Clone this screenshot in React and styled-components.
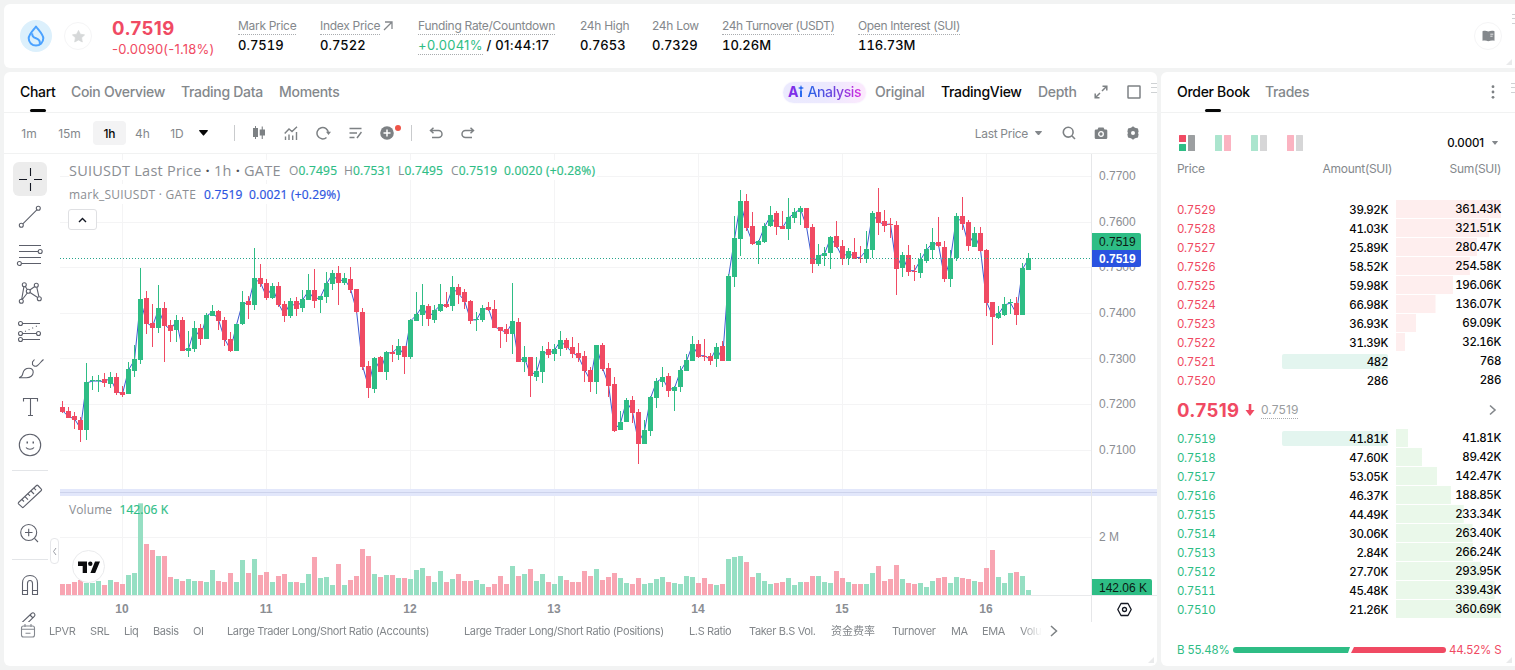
import { useState } from "react";
import styled, { createGlobalStyle, css } from "styled-components";

const GREEN = "#2ebd85";
const RED = "#f04a63";
const GREY = "#84888c";
const INK = "#070808";

const GlobalStyle = createGlobalStyle`
    * {
        box-sizing: border-box;
    }

    body {
        margin: 0;
        background-color: #f2f3f3;
        font-family: Inter, "Noto Sans CJK SC", sans-serif;
        color: ${INK};
        overflow: hidden;
    }

    button {
        border: none;
        background: none;
        padding: 0;
        margin: 0;
        font: inherit;
        color: inherit;
        cursor: pointer;
    }

    svg {
        display: block;
        flex-shrink: 0;
    }
`

const Page = styled.div`
    display: flex;
    flex-direction: column;
    gap: 4px;
    height: 670px;
    padding: 4px 0 4px 4px;
`

const Card = styled.section`
    position: relative;
    background-color: #fff;
    border-radius: 6px;
    overflow: hidden;
`

const Columns = styled.div`
    display: grid;
    grid-template-columns: 1153px 1fr;
    gap: 4px;
    height: 594px;
`

const Grip = styled.span`
    position: absolute;
    top: ${({ $top }) => $top}px;
    right: ${({ $right }) => $right}px;
    width: 6px;
    height: 10px;
    border-top: 1px solid #cfd2d4;
    border-bottom: 1px solid #cfd2d4;

    &::after {
        content: "";
        display: block;
        margin-top: 3px;
        border-top: 1px solid #cfd2d4;
    }
`

const Corner = styled.span`
    position: absolute;
    right: 3px;
    bottom: 3px;
    border: 3px solid #e9eaeb;
    border-top-color: transparent;
    border-left-color: transparent;
`

/* header */

const TopBar = styled(Card)`
    display: flex;
    align-items: center;
    height: 64px;
    padding: 0 13px 0 16px;
    border-radius: 6px 0 0 6px;
`

const CoinLogo = styled.div`
    display: grid;
    place-items: center;
    width: 32px;
    height: 32px;
    border-radius: 50%;
    background-color: #dcf0fc;
`

const RoundButton = styled.button`
    display: grid;
    place-items: center;
    width: 28px;
    height: 28px;
    border: 1px solid #f5f5f6;
    border-radius: 50%;
    color: ${({ $color }) => $color};
`

const PriceBlock = styled.div`
    width: 126px;
    margin-left: 20px;
    padding-top: 2px;
    color: ${RED};

    strong {
        display: block;
        font-size: 18.5px;
        line-height: 24px;
        font-weight: 650;
        letter-spacing: 0.45px;
    }

    span {
        display: block;
        font-size: 13px;
        line-height: 18px;
        letter-spacing: 0.2px;
    }
`

const Stats = styled.dl`
    display: flex;
    gap: 24px;
    margin: -1px auto 0 0;
`

const Stat = styled.div`
    width: ${({ $width }) => $width}px;
    white-space: nowrap;

    dt {
        display: flex;
        align-items: center;
        gap: 3px;
        height: 18px;
        font-size: 12px;
        color: ${GREY};
        letter-spacing: ${({ $track }) => $track ?? -0.3}px;
    }

    dt span, .dotted {
        line-height: 17px;
        border-bottom: 1px dotted ${({ $plain }) => ($plain ? "transparent" : "#a9acaf")};
    }

    dd {
        margin: 1px 0 0;
        height: 18px;
        font-size: 13px;
        line-height: 18px;
        font-weight: 500;
        font-variant-numeric: ${({ $clock }) => ($clock ? "normal" : "tabular-nums")};
        letter-spacing: ${({ $clock }) => ($clock ? 0.28 : 0)}px;
    }

    .dotted {
        display: inline-block;
        font-weight: 400;
        color: ${GREEN};
    }
`

/* tab bars */

const TabBar = styled.nav`
    display: flex;
    align-items: center;
    height: 41px;
    padding: 0 16px;
    border-bottom: 1px solid #f1f2f2;
`

const Tab = styled.button`
    position: relative;
    width: ${({ $width }) => $width}px;
    height: 40px;
    padding-bottom: 1px;
    margin-right: 16px;
    text-align: left;
    white-space: nowrap;
    font-size: 14px;
    font-weight: 500;
    letter-spacing: -0.3px;
    color: ${({ $active }) => ($active ? INK : GREY)};

    ${({ $active, $underline }) => $active && $underline && css`
        &::after {
            content: "";
            position: absolute;
            left: calc(50% - 8px);
            bottom: 0;
            width: 16px;
            height: 3px;
            border-radius: 2px;
            background-color: ${INK};
        }
    `}
`

const Spacer = styled.span`
    flex: 1;
`

const AiBadge = styled.button`
    display: flex;
    align-items: center;
    width: 83px;
    height: 21px;
    padding: 0 0 1px 5px;
    margin-right: 9px;
    border-radius: 11px;
    background: linear-gradient(90deg, #ebeafe, #ece9fe 50%, #fce9fd);
    box-shadow: 0 0 2px #f1ecfe;
    font-size: 14px;
    white-space: nowrap;

    b {
        font-weight: 700;
        color: #7d2fe8;
    }

    em {
        margin-left: 3px;
        font-style: normal;
        font-weight: 500;
        letter-spacing: -0.35px;
        background: linear-gradient(90deg, #2466e8, #7c3ddc 60%, #d62ee0);
        background-clip: text;
        color: transparent;
    }
`

const IconCell = styled.button`
    position: relative;
    display: grid;
    place-items: center;
    flex-shrink: 0;
    width: ${({ $width }) => $width || 32}px;
    height: 32px;
    color: #7d8184;
`

const Dot = styled.i`
    position: absolute;
    top: 8px;
    right: 2px;
    width: 6px;
    height: 6px;
    border-radius: 50%;
    background-color: #ef5448;
`

/* chart card */

const Toolbar = styled.div`
    display: flex;
    align-items: center;
    height: 41px;
    padding: 0 8px;
    border-bottom: 1px solid #f1f2f2;
`

const Interval = styled.button`
    width: ${({ $width }) => $width}px;
    height: 24px;
    border-radius: 4px;
    font-size: 12px;
    font-weight: ${({ $active }) => ($active ? 550 : 400)};
    color: ${({ $active }) => ($active ? INK : GREY)};
    background-color: ${({ $active }) => ($active ? "#f3f3f4" : "transparent")};
`

const Divider = styled.span`
    width: 1px;
    height: 16px;
    margin: 0 8px 0 ${({ $before }) => $before}px;
    background-color: #c9cbcd;
`

const PriceSelect = styled.button`
    display: flex;
    align-items: center;
    gap: 7px;
    margin-right: 11px;
    font-size: 12px;
    letter-spacing: -0.3px;
    color: ${GREY};
`

const ChartBody = styled.div`
    position: relative;
    display: grid;
    grid-template-columns: 56px 1097px;
    height: 468px;
`

const DrawTools = styled.div`
    display: flex;
    flex-direction: column;
    gap: 4px;
    padding: 8px 0 0 9px;
    height: 468px;
    overflow: hidden;

    hr {
        width: 36px;
        height: 1px;
        margin: 4px 0 4px -1px;
        border: none;
        background-color: #e3e5e8;
        flex-shrink: 0;
    }
`

const ToolButton = styled.button`
    width: 34px;
    height: 34px;
    flex-shrink: 0;
    border-radius: 6px;
    background-color: ${({ $active }) => ($active ? "#ececec" : "transparent")};
    color: ${({ $active }) => ($active ? "#131722" : "#5d606b")};
`

const CollapseHandle = styled.button`
    position: absolute;
    left: 46px;
    top: 384px;
    display: grid;
    place-items: center;
    width: 9px;
    height: 26px;
    border: 1px solid #e6e7ea;
    border-radius: 4px;
    background-color: #fff;
    color: #9a9da5;
`

const ChartArea = styled.div`
    position: relative;
    font-family: "Open Sans", sans-serif;
`

const Legend = styled.div`
    position: absolute;
    left: 6px;
    top: 6px;
    padding-left: 3px;
    white-space: nowrap;
    color: #8b8e93;
`

const LegendRow = styled.div`
    display: flex;
    align-items: center;
    width: max-content;
    height: 20px;
    margin-bottom: 4px;
    background-color: #fff;
    font-size: 12px;

    h4 {
        margin: 0;
        width: ${({ $title }) => $title}px;
        font-size: ${({ $big }) => ($big ? 14.5 : 12)}px;
        font-weight: 400;
        letter-spacing: ${({ $track }) => $track || 0}px;
    }

    h4 b {
        color: #4d5056;
        font-weight: 700;
    }
`

const Quote = styled.span`
    width: ${({ $width }) => $width}px;
    color: ${({ $color }) => $color};
    letter-spacing: 0.2px;
    -webkit-text-stroke: 0.2px currentColor;

    i {
        font-style: normal;
        color: #8b8e93;
        -webkit-text-stroke: 0;
    }
`

const LegendToggle = styled.button`
    display: grid;
    place-items: center;
    width: 29px;
    height: 21px;
    margin: 5px 0 0 -1px;
    border: 1px solid #dfe0e3;
    border-radius: 3px;
    background-color: #fff;
    color: #131722;
`

const VolumeLegend = styled(Legend)`
    top: 347px;
    font-size: 12px;
    letter-spacing: 0.1px;

    span {
        margin-left: 4px;
        color: ${GREEN};
        -webkit-text-stroke: 0.2px currentColor;
    }
`

const BrandMark = styled.div`
    position: absolute;
    left: 12px;
    top: 396px;
    display: grid;
    place-items: center;
    width: 33px;
    height: 33px;
    border: 1px solid #eaebed;
    border-radius: 50%;
    background-color: #fff;
`

const AxisLabel = styled.text`
    font-family: "Liberation Sans", Arial, sans-serif;
    font-size: 12px;
    font-weight: ${({ $bold }) => ($bold ? 700 : 400)};
    fill: ${({ $fill }) => $fill || "#8b8e93"};
`

const IndicatorBar = styled.div`
    display: flex;
    align-items: center;
    height: 18px;
    padding-left: 16px;
    color: #7d8184;
`

const IndicatorList = styled.div`
    display: flex;
    width: 993px;
    margin-left: 13px;
    overflow: hidden;
    mask-image: linear-gradient(90deg, #000 973px, transparent 993px);
`

const Indicator = styled.button`
    flex-shrink: 0;
    width: ${({ $width }) => $width}px;
    text-align: left;
    white-space: nowrap;
    font-size: 11px;
    line-height: 18px;
    letter-spacing: -0.38px;
    color: ${GREY};

    &:lang(zh) {
        letter-spacing: 0;
    }
`

/* order book */

const BookCard = styled(Card)`
    border-radius: 6px 0 0 6px;
`

const BookTools = styled.div`
    display: flex;
    align-items: center;
    height: 20px;
    margin: 20px 14px 0 18px;

    svg {
        margin-right: 20px;
    }

    button svg {
        margin: 0;
    }
`

const TickSize = styled.button`
    display: flex;
    align-items: center;
    gap: 8px;
    margin-left: auto;
    padding-right: 3px;
    font-size: 11.5px;
    font-weight: 500;
    letter-spacing: -0.1px;
`

const BookRow = styled.div`
    display: grid;
    grid-template-columns: 105px 106px 105px;
    height: 19px;
    margin-left: 16px;
    font-size: 11.5px;
    line-height: 20px;
    font-variant-numeric: tabular-nums;
    letter-spacing: -0.35px;
`

const BookHead = styled(BookRow)`
    margin: 6px 0 22px 16px;
    grid-template-columns: 105px 110px 109px;
    font-size: 12px;
    line-height: 19px;
    font-variant-numeric: normal;
    letter-spacing: -0.3px;
    color: ${GREY};

    span + span {
        text-align: right;
    }
`

const PriceCell = styled.span`
    color: ${({ $color }) => $color};
`

const AmountCell = styled.span`
    height: 15px;
    margin: 2px 0;
    line-height: 16px;
    text-align: right;
    border-radius: 2px;
    font-weight: 450;
    background-color: ${({ $flash }) => ($flash ? "#e3f5ef" : "transparent")};
`

const SumCell = styled.span`
    position: relative;
    height: 18px;
    margin-left: 8px;
    width: 105px;
    line-height: 18px;
    text-align: right;
    font-weight: 450;
    background: linear-gradient(${({ $tint }) => $tint}, ${({ $tint }) => $tint}) no-repeat 0 0 / var(--depth) 100%;
`

const LastRow = styled.div`
    display: flex;
    align-items: center;
    height: 39px;
    padding: 0 18px 0 16px;

    strong {
        font-size: 18.5px;
        font-weight: 650;
        letter-spacing: 0.4px;
        width: 68px;
        color: ${RED};
    }

    small {
        margin: 2px 0 0 6px;
        font-size: 12px;
        line-height: 16px;
        letter-spacing: 0.1px;
        color: #9a9da0;
        border-bottom: 1px dotted #a9acaf;
    }

    svg:last-child {
        margin-left: auto;
    }
`

const RatioBar = styled.div`
    display: flex;
    align-items: center;
    height: 16px;
    margin: 23px 0 0 16px;
    width: 325px;
    font-size: 11.5px;
    white-space: nowrap;

    span {
        width: 56px;
        color: ${GREEN};
        letter-spacing: -0.12px;
    }

    span:last-child {
        width: 52px;
        margin-left: 3px;
        color: ${RED};
    }
`

const Ratio = styled.i`
    height: 6px;
    width: ${({ $width }) => $width}px;
    background-color: ${({ $buy }) => ($buy ? GREEN : RED)};
    border-radius: ${({ $buy }) => ($buy ? "3px 0 0 3px" : "0 3px 3px 0")};
    clip-path: ${({ $buy }) => $buy
        ? "polygon(0 0, 100% 0, calc(100% - 2px) 100%, 0 100%)"
        : "polygon(3px 0, 100% 0, 100% 100%, 0 100%)"};
    margin-left: ${({ $buy }) => ($buy ? 0 : 1)}px;
`

// [up, high, body top, body bottom, low, volume], in thirds of a pixel from PRICE_TOP
const candles = [
    [0,513,531,546,550,33],[0,532,543,564,564,33],[0,546,558,570,597,39],[0,561,570,600,636,45],[1,399,456,600,630,36],[1,438,450,453,480,36],
    [1,435,450,453,486,42],[0,429,447,459,471,30],[1,426,441,462,474,45],[0,429,441,489,494,39],[0,468,486,495,500,33],[1,396,417,492,492,60],
    [1,346,387,423,440,66],[1,114,207,390,402,275],[0,183,204,282,312,153],[0,222,279,294,350,135],[1,165,234,294,308,117],[0,216,234,288,396,117],
    [0,270,285,303,335,54],[1,255,270,300,335,48],[0,261,270,363,363,42],[1,303,354,363,381,48],[1,273,294,357,366,42],[0,282,294,327,345,42],
    [1,249,255,327,327,39],[1,225,243,258,258,75],[0,240,243,273,300,42],[0,261,270,330,348,39],[0,306,327,363,366,66],[1,282,282,363,363,39],
    [1,183,216,282,285,105],[0,198,213,225,267,66],[1,54,144,225,240,108],[0,102,144,162,172,60],[0,147,159,204,209,69],[1,159,168,204,207,39],
    [0,156,168,225,230,57],[0,213,222,258,276,63],[1,204,213,258,264,39],[0,201,213,237,258,39],[1,180,207,234,246,36],[1,132,180,210,210,63],
    [0,117,180,213,234,114],[1,197,198,210,249,51],[1,126,159,201,219,54],[1,120,129,162,180,30],[0,108,129,159,225,93],[1,129,144,159,165,30],
    [0,111,147,180,188,45],[0,177,177,246,249,57],[0,234,246,411,420,138],[0,393,408,474,504,117],[1,381,384,477,489,63],[0,377,381,426,426,54],
    [1,363,366,426,450,60],[0,345,366,372,395,60],[1,327,348,375,390,51],[0,348,348,381,432,51],[1,266,270,381,387,48],[1,186,252,273,273,75],
    [1,162,225,255,288,81],[0,222,228,267,288,57],[1,225,240,270,279,39],[1,162,222,243,246,72],[0,186,222,231,234,39],[1,138,171,228,243,48],
    [0,162,171,195,222,63],[0,177,186,216,236,42],[0,210,213,273,281,42],[1,246,267,270,303,45],[1,225,234,270,276,33],[0,216,231,240,244,24],
    [0,210,237,294,294,33],[0,291,291,303,354,57],[0,282,297,312,336,33],[1,159,273,312,372,87],[0,264,276,396,396,57],[1,348,381,396,426,63],
    [0,381,381,438,501,78],[1,381,423,441,453,42],[1,348,363,426,459,63],[0,336,357,375,383,39],[1,341,357,372,393,33],[1,303,330,357,378,57],
    [0,324,330,354,360,45],[0,321,351,372,384,39],[0,339,369,384,396,39],[0,363,378,423,456,72],[0,411,420,456,486,57],[1,345,345,456,492,78],
    [0,339,345,417,423,45],[0,399,414,468,501,54],[0,441,462,603,606,66],[1,543,576,600,600,51],[1,504,510,576,576,36],[0,498,510,549,579,33],
    [0,537,546,642,702,51],[1,570,600,642,642,33],[1,498,501,603,618,36],[1,444,453,504,534,48],[1,411,441,456,471,54],[0,429,438,483,501,39],
    [1,468,471,483,543,36],[1,408,420,471,486,33],[1,372,390,423,423,57],[1,318,342,393,393,54],[0,330,342,381,384,36],[0,327,377,381,393,51],
    [0,369,378,393,405,33],[1,339,351,387,411,30],[0,333,348,393,393,33],[1,132,138,393,393,108],[1,-42,24,141,171,114],[1,-120,-87,27,78,117],
    [0,-108,-87,-6,3,99],[0,-54,-12,42,45,54],[1,30,33,45,102,66],[1,-21,-12,36,39,42],[1,-72,-45,-12,-9,33],[0,-57,-51,-9,15,36],
    [0,-57,-12,-3,-3,39],[1,-96,-39,-3,30,51],[1,-66,-54,-36,-21,30],[1,-72,-66,-54,-15,39],[0,-66,-66,-6,-6,39],[0,-18,-9,102,129,57],
    [1,42,75,102,108,57],[1,51,69,78,108,39],[1,18,21,69,117,36],[0,-27,18,51,54,72],[0,30,48,87,105,51],[1,54,63,84,105,39],
    [0,24,66,87,87,33],[0,48,83,86,99,33],[1,3,57,87,99,33],[1,-57,-51,60,84,66],[0,-126,-54,-21,15,87],[0,-60,-27,-12,6,42],
    [0,-36,-18,-14,24,48],[0,-27,-15,117,195,90],[1,66,75,114,141,48],[0,45,75,126,138,36],[0,105,122,126,153,33],[1,69,87,129,144,36],
    [1,42,57,93,99,24],[1,-6,36,60,87,42],[0,-39,36,48,51,51],[0,33,51,147,156,54],[1,60,84,147,171,36],[1,-51,-42,84,93,54],
    [0,-99,-42,-18,0,51],[0,-30,-24,48,63,48],[1,-9,9,51,51,42],[0,-9,9,63,66,39],[0,57,60,219,258,81],[0,216,216,261,345,135],
    [1,228,249,264,267,54],[1,201,222,255,258,36],[1,207,216,219,252,66],[0,201,219,255,285,69],[1,99,114,255,255,57],[1,69,84,120,120,15],
];

const PRICE_TOP = 230;
const VOLUME_BASE = 595;
const days = [10, 11, 12, 13, 14, 15, 16];
const levels = ["0.7700", "0.7600", "0.7500", "0.7400", "0.7300", "0.7200", "0.7100"];

const toY = (v) => PRICE_TOP + v / 3;
const candleX = (i) => 62.5 + i * 6;

const stats = [
    { label: "Mark Price", value: "0.7519", width: 58 },
    { label: "Index Price", value: "0.7522", width: 74, arrow: true },
    { label: "Funding Rate/Countdown", rate: "+0.0041%", value: " / 01:44:17", width: 138 },
    { label: "24h High", value: "0.7653", width: 48, plain: true },
    { label: "24h Low", value: "0.7329", width: 46, plain: true },
    { label: "24h Turnover (USDT)", value: "10.26M", width: 112, track: -0.45 },
    { label: "Open Interest (SUI)", value: "116.73M", width: 102, track: -0.35 },
];

const intervals = [["1m", 34], ["15m", 47], ["1h", 33], ["4h", 33], ["1D", 36]];

const indicators = [
    ["LPVR", 41], ["SRL", 34], ["Liq", 29], ["Basis", 40], ["OI", 34],
    ["Large Trader Long/Short Ratio (Accounts)", 237], ["Large Trader Long/Short Ratio (Positions)", 225],
    ["L.S Ratio", 60], ["Taker B.S Vol.", 82], ["资金费率", 61, "zh"], ["Turnover", 59], ["MA", 31], ["EMA", 38], ["Volume", 50],
];

const asks = [
    ["0.7529", "39.92K", "361.43K"], ["0.7528", "41.03K", "321.51K"], ["0.7527", "25.89K", "280.47K"],
    ["0.7526", "58.52K", "254.58K"], ["0.7525", "59.98K", "196.06K"], ["0.7524", "66.98K", "136.07K"],
    ["0.7523", "36.93K", "69.09K"], ["0.7522", "31.39K", "32.16K"], ["0.7521", "482", "768", true], ["0.7520", "286", "286"],
];

const bids = [
    ["0.7519", "41.81K", "41.81K", true], ["0.7518", "47.60K", "89.42K"], ["0.7517", "53.05K", "142.47K"],
    ["0.7516", "46.37K", "188.85K"], ["0.7515", "44.49K", "233.34K"], ["0.7514", "30.06K", "263.40K"],
    ["0.7513", "2.84K", "266.24K"], ["0.7512", "27.70K", "293.95K"], ["0.7511", "45.48K", "339.43K"], ["0.7510", "21.26K", "360.69K"],
];

const drawTools = [
    { name: "cross", art: <path d="M6 17.5h8M21 17.5h8M17.5 6v8M17.5 21v8" /> },
    { name: "trend", art: <><circle cx="25.3" cy="8.3" r="2" /><circle cx="8.3" cy="25.3" r="2" /><path d="M9.8 23.8 23.8 9.8" /></> },
    { name: "fib", art: <><path d="M6 7.5h22M6 13.5h19M6 19.5h22M8.5 25.5H28" /><circle cx="27.2" cy="13.5" r="2" /><circle cx="6.4" cy="25.5" r="2" /></> },
    { name: "pattern", art: <><circle cx="11.3" cy="8.7" r="2" /><circle cx="23.3" cy="9.3" r="2" /><circle cx="15.3" cy="15.3" r="2" /><circle cx="26.3" cy="22.7" r="2" /><circle cx="8.3" cy="25.3" r="2" /><path d="m8.7 23.3 2.2-12.6M12.3 10.5l2 3M9.3 23.5l5-6.5M16.8 14l5-3.5M23.8 11.3l2.1 9.4M17 16.5l7.7 5" /></> },
    { name: "forecast", art: <><circle cx="7.5" cy="9.5" r="2" /><circle cx="7.5" cy="19.5" r="2" /><circle cx="25.5" cy="19.5" r="2" /><circle cx="7.5" cy="25.5" r="2" /><path d="M9.5 9.5H27M9.5 19.5h14M9.5 25.5H27" /><path d="m12 17.5 14-6.5" strokeDasharray="1 3" /></> },
    { name: "brush", art: <path d="M6 25.700c2.500-.500 3.500-2 3.900-4.500 .7-3 3.100-5 6.100-5 2.500 0 4.200 1.700 4.200 4.100 0 3.200-3 5.400-6.700 5.400ZM19.500 13v-3l2-2.500M19.500 12.500c1 1.800 3.200 2.300 5 1C27 11.500 28 9.500 30.500 7.500" /> },
    { name: "text", art: <path d="M10.500 11.500v-3h14v3M17.500 8.500v17M15 25.500h5" /> },
    { name: "smile", art: <><circle cx="17" cy="17" r="10.700" /><path d="M13 19.500c1.500 2.300 6.500 2.300 8 0" /><path d="M13.500 14.500h1.500M19.500 14.500h1.500" strokeWidth="1.800" /></> },
    { name: "ruler", divided: true, art: <><path d="M5.500 23.500 23.500 6.500a1 1 0 0 1 1.400 0l3.400 3.600a1 1 0 0 1 0 1.400L10.500 28.200a1 1 0 0 1-1.400 0l-3.600-3.400a1 1 0 0 1 0-1.300Z" /><path d="m9 20.500 2 2M12 17.700l3 3M15 14.800l2 2M18 12l3 3M21 9.200l2 2" /></> },
    { name: "zoom", art: <><circle cx="15.700" cy="15.500" r="8" /><path d="M21.500 21.300l3.500 3.700M12 15.500h7.500M15.700 11.700v7.500" /></> },
    { name: "magnet", divided: true, art: <path d="M9.500 26.500V15c0-4.500 3-7.500 7.500-7.500s7.500 3 7.500 7.500v11.500h-5V15.500c0-2-1-3-2.500-3s-2.500 1-2.500 3v11ZM9.500 22.500h5M19.500 22.500h5" /> },
    { name: "pencil", art: <path d="m8.500 17 10-9.500c1-1 2-1 2.800 0s1 1.800 0 2.800l-8 8M17 9l3 3M19 16.500h5" /> },
];

function ToolbarCaret({ size = 7, color = GREY }) {
    return (
        <svg width={size} height={size / 1.6} viewBox="0 0 8 5"><path d="M.6 0h6.800a.5.5 0 0 1 .4.800L4.500 4.700a.6.6 0 0 1-1 0L.2.800A.5.5 0 0 1 .6 0Z" fill={color} /></svg>
    )
}

function Header() {
    return (
        <TopBar>
            <CoinLogo>
                <svg width="18" height="22" viewBox="0 0 18 22" fill="none" stroke="#4ba2ff" strokeWidth="2" strokeLinejoin="round">
                    <path d="M9 1.500C6.500 5 1.700 9.500 1.700 13.300a7.300 7.300 0 0 0 14.600 0C16.300 9.500 11.500 5 9 1.500Z" />
                    <path d="M5.300 8.200c-.6 3 1.200 4.200 3.700 5 3 1 4.500 2.300 3.700 5.800" />
                </svg>
            </CoinLogo>
            <RoundButton $color="#d6d8d9" style={{ marginLeft: 12 }}>
                <svg width="13" height="13" viewBox="0 0 13 13"><path d="m6.500.4 1.900 3.800 4.200.6-3 3 .7 4.200-3.800-2-3.800 2 .7-4.200-3-3 4.200-.6Z" fill="currentColor" stroke="currentColor" strokeWidth=".7" strokeLinejoin="round" /></svg>
            </RoundButton>
            <PriceBlock>
                <strong>0.7519</strong>
                <span>-0.0090(-1.18%)</span>
            </PriceBlock>
            <Stats>
                {stats.map(({ label, value, rate, width, plain, arrow, track }) => (
                    <Stat key={label} $width={width} $plain={plain} $track={track} $clock={!!rate}>
                        <dt>
                            <span>{label}</span>
                            {arrow && <svg width="10" height="10" viewBox="0 0 10 10" fill="none" stroke={GREY} strokeWidth="1.300"><path d="M1 9 9 1M2 1h7v7" /></svg>}
                        </dt>
                        <dd>{rate && <span className="dotted">{rate}</span>}{value}</dd>
                    </Stat>
                ))}
            </Stats>
            <RoundButton $color="#84888c">
                <svg width="13" height="12" viewBox="0 0 13 12">
                    <path d="M.5 1.200C2.500.6 4.600.7 6.200 1.600v9.600C4.600 10.300 2.500 10.200.5 10.700ZM6.200 1.600C8.500.700 10.500.600 12.500 1.200v9.500c-2-.5-4-.4-6.300.5Z" fill="currentColor" />
                    <path d="M8.300 4.200h3M8.300 6.200h2.300" stroke="#fff" strokeWidth=".8" />
                </svg>
            </RoundButton>
            <Grip $top={10} $right={-3} />
            <Corner />
        </TopBar>
    )
}

function DrawToolbar() {
    const [tool, setTool] = useState("cross");

    return (
        <DrawTools>
            {drawTools.map(({ name, art, divided }) => [
                divided && <hr key={name + "-line"} />,
                <ToolButton key={name} $active={tool === name} onClick={() => setTool(name)}>
                    <svg width="34" height="34" viewBox="0 0 34 34" fill="none" stroke="currentColor" strokeWidth="1.100">{art}</svg>
                </ToolButton>,
            ])}
        </DrawTools>
    )
}

function PriceChart() {
    const markLine = candles.map(([up, , top, bottom], i) => `${candleX(i)},${toY(up ? top + 3 : bottom - 4).toFixed(1)}`).join(" ");

    return (
        <svg width="1097" height="468" viewBox="60 154 1097 468">
            <g stroke="#f4f4f5" strokeWidth="1">
                {days.map((day, i) => <line key={day} x1={122.5 + i * 144} x2={122.5 + i * 144} y1="154" y2="595" />)}
                {levels.map((level, i) => <line key={level} x1="60" x2="1091" y1={Math.round(176 + i * 45.6) + 0.5} y2={Math.round(176 + i * 45.6) + 0.5} />)}
                <line x1="60" x2="1091" y1="537.5" y2="537.5" />
            </g>
            {candles.map(([up, , , , , volume], i) => (
                <rect key={i} x={candleX(i) - 2.5} y={VOLUME_BASE - volume / 3} width="5" height={volume / 3} fill={up ? "#96dfc3" : "#f8a5b2"} />
            ))}
            <polyline points={markLine} fill="none" stroke="#3d5bd0" strokeWidth="1" />
            {candles.map(([up, high, top, bottom, low], i) => (
                <g key={i} fill={up ? GREEN : RED} shapeRendering="crispEdges">
                    <rect x={candleX(i) - 0.5} y={toY(high)} width="1" height={(low - high) / 3} />
                    <rect x={candleX(i) - 2.5} y={toY(top)} width="5" height={Math.max(1, (bottom - top) / 3)} />
                </g>
            ))}
            <line x1="60" x2="1091" y1="258.500" y2="258.500" stroke="#26a58c" strokeDasharray="1 2" />
            <rect x="60" y="489" width="1097" height="7" fill="#e2e7fb" />
            <rect x="60" y="492" width="1097" height="1" fill="#cdd3ec" />
            <line x1="60" x2="1157" y1="595.500" y2="595.500" stroke="#e9eaec" />
            <line x1="1091.500" x2="1091.500" y1="154" y2="622" stroke="#e6e7e9" />
            {levels.map((level, i) => <AxisLabel key={level} x="1099" y={180 + i * 45.67}>{level}</AxisLabel>)}
            <AxisLabel x="1099" y="541">2 M</AxisLabel>
            <path d="M1092 233h47a2 2 0 0 1 2 2v15h-49Z" fill={GREEN} />
            <path d="M1092 250h49v15a2 2 0 0 1-2 2h-47Z" fill="#2a53e0" />
            <path d="M1092 579h58a2 2 0 0 1 2 2v14h-60Z" fill={GREEN} />
            <AxisLabel x="1099" y="246" $fill="#0b1a14">0.7519</AxisLabel>
            <AxisLabel x="1099" y="263" $fill="#fff" $bold>0.7519</AxisLabel>
            <AxisLabel x="1099" y="592" $fill="#0b1a14">142.06 K</AxisLabel>
            {days.map((day, i) => <AxisLabel key={day} x={122 + i * 144} y="613" textAnchor="middle" $bold>{day}</AxisLabel>)}
            <g fill="none" stroke="#131722" strokeWidth="1.300">
                <path d="m1121 603.500-3.200 6 3.200 6h7l3.200-6-3.200-6Z" strokeLinejoin="round" />
                <circle cx="1124.500" cy="609.500" r="2" />
            </g>
        </svg>
    )
}

function ChartCard() {
    const [interval, setActiveInterval] = useState("1h");

    return (
        <Card>
            <TabBar>
                <Tab $width={35} $active $underline>Chart</Tab>
                <Tab $width={94}>Coin Overview</Tab>
                <Tab $width={82}>Trading Data</Tab>
                <Tab $width={61}>Moments</Tab>
                <Spacer />
                <AiBadge>
                    <b>A</b>
                    <svg width="6" height="13" viewBox="0 0 6 13"><path d="M2 5.500h2v6.500H2zM3 0l.8 2L6 3l-2.200 1L3 6l-.8-2L0 3l2.200-1Z" fill="#2b6bef" /></svg>
                    <em>Analysis</em>
                </AiBadge>
                <Tab $width={50}>Original</Tab>
                <Tab $width={81} $active>TradingView</Tab>
                <Tab $width={40}>Depth</Tab>
                <svg width="14" height="14" viewBox="0 0 14 14" fill="none" stroke="#7d8184" strokeWidth="1.500"><path d="M8 6l4.500-4.500M8.500 1.200h4.300v4.300M6 8l-4.500 4.500M5.500 12.800H1.200V8.500" /></svg>
                <svg width="14" height="14" viewBox="0 0 14 14" fill="none" stroke="#7d8184" strokeWidth="1.500" style={{ marginLeft: 19 }}><rect x="1" y="1" width="12" height="12" rx=".5" /></svg>
            </TabBar>
            <Grip $top={11} $right={0} />
            <Toolbar>
                {intervals.map(([label, width]) => (
                    <Interval key={label} $width={width} $active={interval === label} onClick={() => setActiveInterval(label)}>{label}</Interval>
                ))}
                <IconCell $width={16}><ToolbarCaret size={9} color={INK} /></IconCell>
                <Divider $before={23} />
                <IconCell>
                    <svg width="14" height="14" viewBox="0 0 14 14" fill="currentColor"><path d="M3 0h1v2h2v9H4v2H3v-2H1V2h2zM9.700 .5h1.100v3h2.200v6h-2.200V13H9.700V9.500H7.700v-6h2z" /></svg>
                </IconCell>
                <IconCell>
                    <svg width="14" height="14" viewBox="0 0 14 14" fill="none" stroke="currentColor" strokeWidth="1.400"><path d="M.7 7.500 5 3l3 2.500L13 .7M1.500 10.500V14M5 8.500V14M8.700 9.500V14M12.500 6v8" /></svg>
                </IconCell>
                <IconCell>
                    <svg width="15" height="14" viewBox="0 0 15 14" fill="none" stroke="currentColor" strokeWidth="1.500"><path d="M10.500 11.500A5.700 5.700 0 1 1 12.400 7" /><path d="M10 5.800h5l-2.500 3.200Z" fill="currentColor" stroke="none" /></svg>
                </IconCell>
                <IconCell>
                    <svg width="13" height="12" viewBox="0 0 13 12" fill="none" stroke="currentColor" strokeWidth="1.500"><path d="M.5 1.500h12M.5 6H8M.5 10.500h5M8 11l4.500-6" /></svg>
                </IconCell>
                <IconCell>
                    <svg width="14" height="14" viewBox="0 0 14 14"><circle cx="7" cy="7" r="6.800" fill="currentColor" /><path d="M7 3.500v7M3.500 7h7" stroke="#fff" strokeWidth="1.500" /></svg>
                    <Dot />
                </IconCell>
                <Divider $before={8} />
                <IconCell>
                    <svg width="14" height="12" viewBox="0 0 14 12" fill="none" stroke="currentColor" strokeWidth="1.500"><path d="M4.500.7 1.500 3.500l3 2.800M2 3.500h7.500a3.500 3.500 0 0 1 0 7H3" /></svg>
                </IconCell>
                <IconCell>
                    <svg width="14" height="12" viewBox="0 0 14 12" fill="none" stroke="currentColor" strokeWidth="1.500"><path d="m9.500.7 3 2.800-3 2.800M12 3.500H4.500a3.500 3.500 0 0 0 0 7H11" /></svg>
                </IconCell>
                <Spacer />
                <PriceSelect>Last Price <ToolbarCaret /></PriceSelect>
                <IconCell>
                    <svg width="14" height="14" viewBox="0 0 14 14" fill="none" stroke="currentColor" strokeWidth="1.600"><circle cx="6.200" cy="6.200" r="4.900" /><path d="m9.800 9.800 3.200 3.200" /></svg>
                </IconCell>
                <IconCell>
                    <svg width="14" height="13" viewBox="0 0 14 13"><path d="M4.500.5h5l1 2H12a1.300 1.300 0 0 1 1.300 1.300v7A1.300 1.300 0 0 1 12 12H2A1.300 1.300 0 0 1 .7 10.800v-7A1.300 1.300 0 0 1 2 2.500h1.500Z" fill="currentColor" /><circle cx="7" cy="7" r="2.300" fill="none" stroke="#fff" strokeWidth="1.300" /></svg>
                </IconCell>
                <IconCell>
                    <svg width="14" height="14" viewBox="0 0 14 14"><path d="m7 .3 2 1.500 3 .8.600 3.200-.6 1.200.6 1.200-.6 3.200-3 .8-2 1.500-2-1.500-3-.8-.6-3.200.6-1.200-.6-1.200.6-3.200 3-.8Z" fill="currentColor" /><circle cx="7" cy="7" r="2" fill="#fff" /></svg>
                </IconCell>
            </Toolbar>
            <ChartBody>
                <DrawToolbar />
                <ChartArea>
                    <PriceChart />
                    <Legend>
                        <LegendRow $title={220} $track={0.24} $big>
                            <h4>SUIUSDT Last Price <b>·</b> 1h <b>·</b> GATE</h4>
                            <Quote $width={55} $color={GREEN}><i>O</i>0.7495</Quote>
                            <Quote $width={54} $color={GREEN}><i>H</i>0.7531</Quote>
                            <Quote $width={53} $color={GREEN}><i>L</i>0.7495</Quote>
                            <Quote $width={53} $color={GREEN}><i>C</i>0.7519</Quote>
                            <Quote $width={93} $color={GREEN}>0.0020 (+0.28%)</Quote>
                        </LegendRow>
                        <LegendRow $title={135} $track={0.24}>
                            <h4>mark_SUIUSDT · GATE</h4>
                            <Quote $width={45} $color="#2a53e0">0.7519</Quote>
                            <Quote $width={93} $color="#2a53e0">0.0021 (+0.29%)</Quote>
                        </LegendRow>
                        <LegendToggle>
                            <svg width="9" height="6" viewBox="0 0 9 6" fill="none" stroke="currentColor" strokeWidth="1.400"><path d="m1 5 3.500-3.500L8 5" /></svg>
                        </LegendToggle>
                    </Legend>
                    <VolumeLegend>Volume <span>142.06 K</span></VolumeLegend>
                    <BrandMark>
                        <svg width="22" height="12" viewBox="0 0 22 12" fill="#0b0c0e"><path d="M0 .5h9V12H4.700V5H0zM17 .5h5L17.200 12h-4.800z" /><circle cx="12.300" cy="2.700" r="2.200" /></svg>
                    </BrandMark>
                </ChartArea>
                <CollapseHandle>
                    <svg width="5" height="9" viewBox="0 0 5 9" fill="none" stroke="currentColor"><path d="M4 1 1.500 4.500 4 8" /></svg>
                </CollapseHandle>
            </ChartBody>
            <IndicatorBar>
                <svg width="16" height="14" viewBox="0 0 16 14" fill="none" stroke="#84888f" strokeWidth="1.100"><rect x="1.500" y="2" width="13" height="11" rx="2" /><path d="M1.500 5.200h13M5 0v3M11 0v3M5.500 9.200h5" /></svg>
                <IndicatorList>
                    {indicators.map(([label, width, lang]) => <Indicator key={label} $width={width} lang={lang}>{label}</Indicator>)}
                </IndicatorList>
                <svg width="8" height="12" viewBox="0 0 8 12" fill="none" stroke="currentColor" strokeWidth="1.500" style={{ marginLeft: 8 }}><path d="m1 1 5.500 5L1 11" /></svg>
            </IndicatorBar>
            <Corner />
        </Card>
    )
}

function BookSide({ rows, color, tint }) {
    return rows.map(([price, amount, sum, flash]) => {
        const depth = sum.endsWith("K") ? (parseFloat(sum) / 361.43) * 100 : 0;
        return (
            <BookRow key={price}>
                <PriceCell $color={color}>{price}</PriceCell>
                <AmountCell $flash={flash}>{amount}</AmountCell>
                <SumCell $tint={tint} style={{ "--depth": `${depth}%` }}>{sum}</SumCell>
            </BookRow>
        )
    })
}

function BookLayoutIcon({ left, right, split }) {
    return (
        <svg width="16" height="16" viewBox="0 0 16 16">
            {split ? <><rect width="7" height="7" rx=".5" fill={RED} /><rect y="9" width="7" height="7" rx=".5" fill={GREEN} /></> : <rect width="7" height="16" rx=".5" fill={left} />}
            <rect x="9" width="7" height="16" rx=".5" fill={right} />
        </svg>
    )
}

function OrderBook() {
    return (
        <BookCard>
            <TabBar>
                <Tab $width={72} $active $underline>Order Book</Tab>
                <Tab $width={46}>Trades</Tab>
                <Spacer />
                <svg width="14" height="14" viewBox="0 0 14 14" fill="#7d8184"><circle cx="8" cy="1.700" r="1.400" /><circle cx="8" cy="7" r="1.400" /><circle cx="8" cy="12.300" r="1.400" /></svg>
            </TabBar>
            <Grip $top={11} $right={-2} />
            <BookTools>
                <BookLayoutIcon split right="#9c9fa1" />
                <BookLayoutIcon left="#abe5ce" right="#fbb3c1" />
                <BookLayoutIcon left="#abe5ce" right="#d6d6d7" />
                <BookLayoutIcon left="#fbb3c1" right="#d6d6d7" />
                <TickSize>0.0001 <ToolbarCaret size={6} /></TickSize>
            </BookTools>
            <BookHead>
                <span>Price</span>
                <span>Amount(SUI)</span>
                <span>Sum(SUI)</span>
            </BookHead>
            <BookSide rows={asks} color={RED} tint="#feeeee" />
            <LastRow>
                <strong>0.7519</strong>
                <svg width="10" height="12" viewBox="0 0 10 12" fill={RED}><path d="M3.700 0h2.600v6H9.500L5 12 .5 6h3.200z" /></svg>
                <small>0.7519</small>
                <svg width="8" height="12" viewBox="0 0 8 12" fill="none" stroke={GREY} strokeWidth="1.600"><path d="m1 1.500 5 4.500-5 4.500" /></svg>
            </LastRow>
            <BookSide rows={bids} color={GREEN} tint="#eaf8ea" />
            <RatioBar>
                <span>B 55.48%</span>
                <Ratio $buy $width={117} />
                <Ratio $width={95} />
                <span>44.52% S</span>
            </RatioBar>
            <Corner />
        </BookCard>
    )
}

function App() {
    return (
    <>
        <GlobalStyle />
        <Page>
            <Header />
            <Columns>
                <ChartCard />
                <OrderBook />
            </Columns>
        </Page>
    </>)
}

export default App
